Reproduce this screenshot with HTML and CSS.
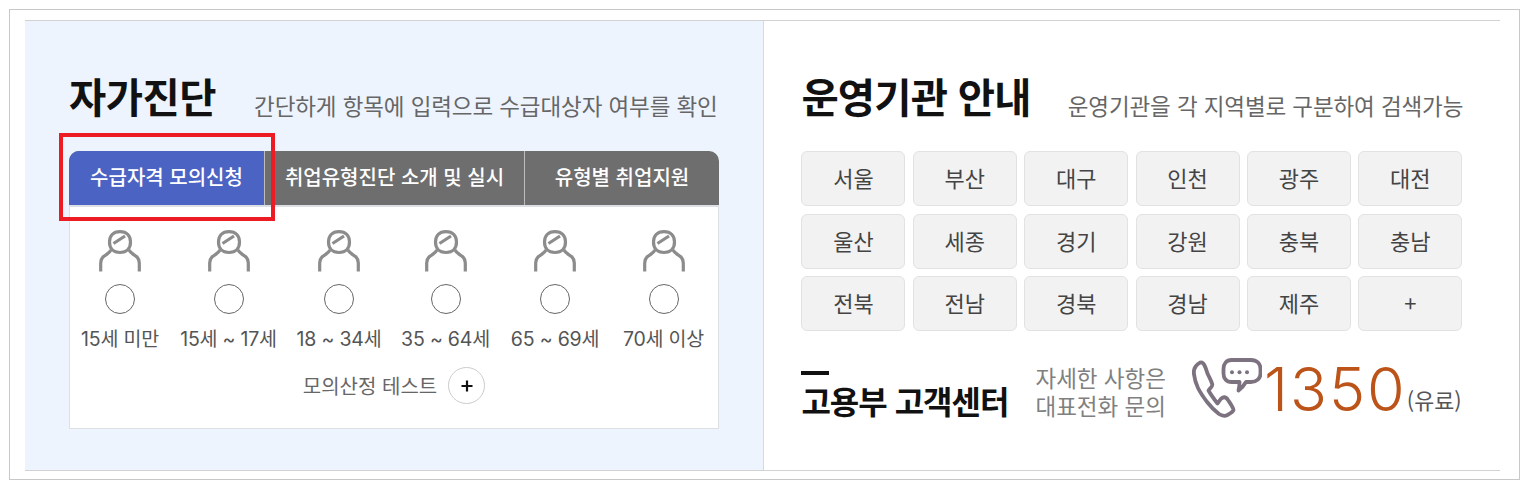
FILE: index.html
```html
<!DOCTYPE html>
<html lang="ko">
<head>
    <meta charset="UTF-8">
    <meta name="viewport" content="width=device-width, initial-scale=1.0">
    <title>자가진단 / 운영기관 안내</title>
    <link rel="stylesheet" href="styles.css">
</head>
<body>
    <div class="frame">
        <div class="inner">
            <section class="diagnosis">
                <div class="heading">
                    <h2>자가진단</h2>
                    <p>간단하게 항목에 입력으로 수급대상자 여부를 확인</p>
                </div>
                <div class="tabs">
                    <a class="tab tab-first active">수급자격 모의신청</a>
                    <a class="tab tab-second">취업유형진단 소개 및 실시</a>
                    <a class="tab tab-third">유형별 취업지원</a>
                </div>
                <div class="tab-body">
                    <ul class="ages">
                        <li>
                            <svg class="person" viewBox="0 0 42 42"><use href="#person"/></svg>
                            <span class="radio"></span>
                            <span class="age">15세 미만</span>
                        </li>
                        <li>
                            <svg class="person" viewBox="0 0 42 42"><use href="#person"/></svg>
                            <span class="radio"></span>
                            <span class="age">15세 ~ 17세</span>
                        </li>
                        <li>
                            <svg class="person" viewBox="0 0 42 42"><use href="#person"/></svg>
                            <span class="radio"></span>
                            <span class="age">18 ~ 34세</span>
                        </li>
                        <li>
                            <svg class="person" viewBox="0 0 42 42"><use href="#person"/></svg>
                            <span class="radio"></span>
                            <span class="age">35 ~ 64세</span>
                        </li>
                        <li>
                            <svg class="person" viewBox="0 0 42 42"><use href="#person"/></svg>
                            <span class="radio"></span>
                            <span class="age">65 ~ 69세</span>
                        </li>
                        <li>
                            <svg class="person" viewBox="0 0 42 42"><use href="#person"/></svg>
                            <span class="radio"></span>
                            <span class="age">70세 이상</span>
                        </li>
                    </ul>
                    <div class="test-row">
                        <span>모의산정 테스트</span>
                        <span class="plus-btn">
                            <svg viewBox="0 0 12 12"><path d="M6 0.5V11.5M0.5 6H11.5"/></svg>
                        </span>
                    </div>
                </div>
                <div class="highlight"></div>
            </section>

            <section class="agency">
                <div class="heading">
                    <h2>운영기관 안내</h2>
                    <p>운영기관을 각 지역별로 구분하여 검색가능</p>
                </div>
                <div class="regions">
                    <a>서울</a><a>부산</a><a>대구</a><a>인천</a><a>광주</a><a>대전</a>
                    <a>울산</a><a>세종</a><a>경기</a><a>강원</a><a>충북</a><a>충남</a>
                    <a>전북</a><a>전남</a><a>경북</a><a>경남</a><a>제주</a><a>+</a>
                </div>
                <div class="callcenter">
                    <strong class="cc-name">고용부 고객센터</strong>
                    <p class="cc-desc">자세한 사항은<br>대표전화 문의</p>
                    <svg class="cc-icon" viewBox="0 0 70 60">
                        <path d="M8.300 4.500C5 6 1.500 10 1.800 15C2.500 21 4 26 6 30C9 36 12 40 15.500 44.500C19 49 23 53 27 56C30 58 33 58.300 35.500 57C38 55.500 41 54 41.500 52C41.500 50 38 45 36 42C34.500 39.500 32.500 38.500 30 40C28 41 27 44 25.500 45.500C22 41 19 37 16.500 32.500C17.500 30.500 20.500 29 20.300 26.500C19.500 23 17 19 15.500 15.500C14 11 12 3 8.300 4.500Z"/>
                        <path d="M39.500 2H59C64.500 2 68.500 5.500 68.500 11V15.500C68.500 20.500 64.500 24 59 24H54C52 27.500 49 30.500 46.500 32.500C47.300 29.500 47.500 27 47.500 24H39.500C34.500 24 31.500 20.500 31.500 15.500V11C31.500 5.500 34.500 2 39.500 2Z"/>
                        <circle class="dot" cx="40" cy="14.300" r="2"/>
                        <circle class="dot" cx="47.500" cy="14.300" r="2"/>
                        <circle class="dot" cx="55" cy="14.300" r="2"/>
                    </svg>
                    <span class="cc-number">1350</span>
                    <span class="cc-paid">(유료)</span>
                </div>
            </section>
        </div>
    </div>

    <svg class="defs" width="0" height="0">
        <symbol id="person" viewBox="0 0 42 42">
            <path d="M21 1.700C14 1.700 10.500 6 10.500 12C10.500 18 14 22.500 21 22.500C28 22.500 31.500 18 31.500 12C31.500 6 28 1.700 21 1.700Z"/>
            <path d="M14.500 13.500L26 6"/>
            <path d="M12 20C10 24 6 25 4 27C2 29 1.700 31 1.700 33V41.500M30 20C32 24 36 25 38 27C40 29 40.300 31 40.300 33V41.500"/>
        </symbol>
    </svg>
</body>
</html>
```

FILE: styles.css
```css
* {
    box-sizing: border-box;
}
body {
    margin: 0;
    background: white;
    font-family: "Noto Sans CJK KR", "Noto Sans", sans-serif;
    color: #666;
}
h2, p, ul {
    margin: 0;
    padding: 0;
}
.defs {
    position: absolute;
}
.frame {
    width: 1511px;
    height: 471px;
    margin: 9px 0 0 9px;
    padding: 10px 19px 8px 15px;
    border: 1px solid #c8c8c8;
}
.inner {
    display: flex;
    height: 451px;
    border-top: 1px solid #d2d2d2;
    border-bottom: 1px solid #d2d2d2;
}
.heading {
    display: flex;
    align-items: flex-start;
    height: 130px;
    padding-top: 45px;
}
.heading h2 {
    color: #111;
    font-size: 40.500px;
    font-weight: 700;
    line-height: 60px;
    letter-spacing: -0.500px;
    white-space: nowrap;
}
.heading p {
    margin-top: 24px;
    font-size: 22.500px;
    line-height: 30px;
    letter-spacing: -0.100px;
    white-space: nowrap;
}

/* left panel */
.diagnosis {
    position: relative;
    width: 739px;
    padding-left: 44px;
    background: #edf4fe;
    border-right: 1px solid #d5d9e0;
}
.diagnosis .heading p {
    margin-left: 38px;
}
.tabs {
    display: flex;
    width: 650px;
    height: 55px;
    border-radius: 10px 10px 0 0;
    overflow: hidden;
    background: #6e6e6e;
}
.tab {
    display: flex;
    align-items: center;
    justify-content: center;
    height: 54px;
    padding-bottom: 3px;
    color: white;
    font-size: 20px;
    font-weight: 500;
    white-space: nowrap;
    border-right: 1px solid #bdbdbd;
}
.tab-first {
    width: 196px;
}
.tab-second {
    width: 260px;
}
.tab-third {
    flex: 1;
    border-right: 0;
}
.active {
    background: #4b63c3;
}
.tab-body {
    width: 650px;
    height: 224px;
    margin-top: -1px;
    background: white;
    border: 1px solid #dcdfe4;
    border-top: 2px solid #dcdfe4;
}
.ages {
    display: grid;
    grid-template-columns: 80px 96px 84px 88px 90px 86px;
    column-gap: 20.500px;
    padding: 23px 0 0 10px;
    list-style: none;
}
.ages li {
    display: flex;
    flex-direction: column;
    align-items: center;
}
.person {
    width: 42px;
    height: 42px;
    fill: none;
    stroke: #8c8c8c;
    stroke-width: 3.200;
}
.radio {
    width: 30px;
    height: 30px;
    margin-top: 12px;
    border: 1px solid #666;
    border-radius: 50%;
}
.age {
    margin-top: 12px;
    color: #555;
    font-family: "Inter", "Noto Sans CJK KR", sans-serif;
    font-size: 19.500px;
    line-height: 26px;
    letter-spacing: -0.200px;
    white-space: nowrap;
}
.test-row {
    display: flex;
    align-items: center;
    justify-content: center;
    gap: 11px;
    margin-top: 15px;
    font-size: 20px;
}
.plus-btn {
    display: flex;
    align-items: center;
    justify-content: center;
    width: 37px;
    height: 37px;
    background: white;
    border: 1px solid #ccc;
    border-radius: 50%;
}
.plus-btn svg {
    width: 12px;
    height: 12px;
    fill: none;
    stroke: #111;
    stroke-width: 2.200;
}
.highlight {
    position: absolute;
    left: 34px;
    top: 112px;
    width: 216px;
    height: 88px;
    border: 4px solid #ed1c24;
}

/* right panel */
.agency {
    flex: 1;
    padding-left: 37.400px;
}
.agency .heading h2 {
    letter-spacing: -0.800px;
}
.agency .heading p {
    margin-left: 37px;
}
.regions {
    display: grid;
    grid-template-columns: repeat(6, 104px);
    grid-auto-rows: 55px;
    column-gap: 7.400px;
    row-gap: 7.500px;
}
.regions a {
    display: flex;
    align-items: center;
    justify-content: center;
    padding-bottom: 3px;
    background: #f2f2f2;
    border: 1px solid #e2e2e2;
    border-radius: 6px;
    color: #444;
    font-size: 22px;
}
.callcenter {
    display: flex;
    align-items: flex-start;
    height: 80px;
    margin-top: 17px;
}
.cc-name {
    position: relative;
    margin-top: 32px;
    color: #111;
    font-size: 32px;
    font-weight: 700;
    line-height: 40px;
    letter-spacing: -1px;
    white-space: nowrap;
}
.cc-name::before {
    content: "";
    position: absolute;
    left: 0;
    top: -9px;
    width: 28px;
    height: 4px;
    background: #111;
}
.cc-desc {
    margin: 15px 0 0 27px;
    color: #808080;
    font-size: 22.500px;
    line-height: 28px;
    white-space: nowrap;
}
.cc-icon {
    width: 70px;
    height: 60px;
    margin: 10px 0 0 26px;
    fill: none;
    stroke: #7d7380;
    stroke-width: 3.800;
    stroke-linejoin: round;
}
.cc-icon .dot {
    fill: #7d7380;
    stroke: none;
}
.cc-number {
    margin: 11px 0 0 2px;
    color: #bc5319;
    font-family: "Inter", sans-serif;
    font-size: 61px;
    font-weight: 300;
    line-height: 60px;
    letter-spacing: 2px;
}
.cc-paid {
    margin-top: 37px;
    color: #555;
    font-size: 21.800px;
    line-height: 30px;
    white-space: nowrap;
}
```
